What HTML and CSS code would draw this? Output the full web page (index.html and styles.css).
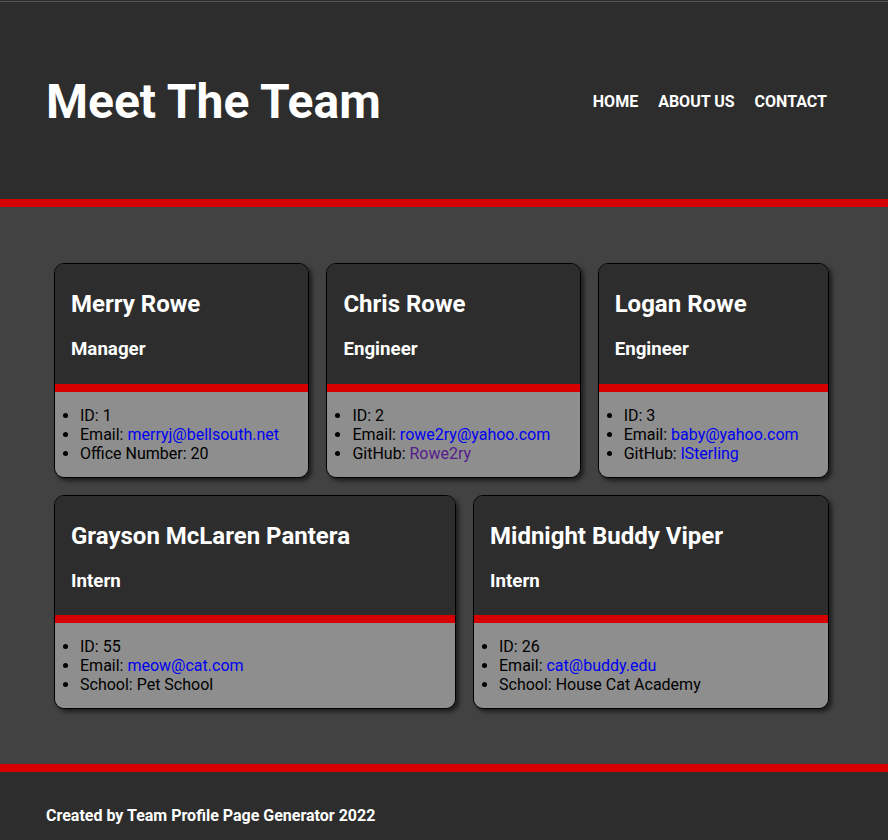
FILE: index.html
```html
<!DOCTYPE html>
<html lang="en">
<head>
<meta charset="utf-8">
<title>Meet The Team</title>
<link rel="stylesheet" href="styles.css">
</head>
<body>
<header class="site-header">
  <h1 class="site-title">Meet The Team</h1>
  <nav class="site-nav">
    <a class="nav-link" href="#">HOME</a>
    <a class="nav-link" href="#">ABOUT US</a>
    <a class="nav-link" href="#">CONTACT</a>
  </nav>
</header>
<main class="team">
  <div class="card">
    <div class="card-header">
      <h2 class="card-name">Merry Rowe</h2>
      <h3 class="card-role">Manager</h3>
    </div>
    <div class="card-body">
      <ul class="card-list">
        <li>ID: 1</li>
        <li>Email: <a class="link" href="#">merryj@bellsouth.net</a></li>
        <li>Office Number: 20</li>
      </ul>
    </div>
  </div>
  <div class="card">
    <div class="card-header">
      <h2 class="card-name">Chris Rowe</h2>
      <h3 class="card-role">Engineer</h3>
    </div>
    <div class="card-body">
      <ul class="card-list">
        <li>ID: 2</li>
        <li>Email: <a class="link" href="#">rowe2ry@yahoo.com</a></li>
        <li>GitHub: <a class="link visited" href="#">Rowe2ry</a></li>
      </ul>
    </div>
  </div>
  <div class="card">
    <div class="card-header">
      <h2 class="card-name">Logan Rowe</h2>
      <h3 class="card-role">Engineer</h3>
    </div>
    <div class="card-body">
      <ul class="card-list">
        <li>ID: 3</li>
        <li>Email: <a class="link" href="#">baby@yahoo.com</a></li>
        <li>GitHub: <a class="link" href="#">lSterling</a></li>
      </ul>
    </div>
  </div>
  <div class="card">
    <div class="card-header">
      <h2 class="card-name">Grayson McLaren Pantera</h2>
      <h3 class="card-role">Intern</h3>
    </div>
    <div class="card-body">
      <ul class="card-list">
        <li>ID: 55</li>
        <li>Email: <a class="link" href="#">meow@cat.com</a></li>
        <li>School: Pet School</li>
      </ul>
    </div>
  </div>
  <div class="card">
    <div class="card-header">
      <h2 class="card-name">Midnight Buddy Viper</h2>
      <h3 class="card-role">Intern</h3>
    </div>
    <div class="card-body">
      <ul class="card-list">
        <li>ID: 26</li>
        <li>Email: <a class="link" href="#">cat@buddy.edu</a></li>
        <li>School: House Cat Academy</li>
      </ul>
    </div>
  </div>
</main>
<footer class="site-footer">
  <p class="footer-text">Created by Team Profile Page Generator 2022</p>
</footer>
</body>
</html>
```

FILE: styles.css
```css
* {
  box-sizing: border-box;
}

html, body {
  margin: 0;
  padding: 0;
}

body {
  font-family: Roboto, "Liberation Sans", sans-serif;
  background: #424242;
  color: #000;
}

.site-header {
  height: 207px;
  background: #2d2d2d;
  border-bottom: 8px solid #d60000;
  box-shadow: inset 0 1px 0 #2d2d2d, inset 0 2px 0 #55555a;
  display: flex;
  align-items: center;
  justify-content: space-between;
  padding: 3px 61px 0 46px;
}

.site-title {
  margin: 0;
  font-size: 48px;
  font-weight: 700;
  color: #fff;
}

.site-nav {
  display: flex;
  gap: 20px;
}

.nav-link {
  color: #fff;
  text-decoration: none;
  font-size: 16px;
  font-weight: 700;
}

.team {
  display: flex;
  flex-wrap: wrap;
  gap: 17px 17px;
  padding: 56px 59px 55px 54px;
  background: #424242;
}

.card {
  flex: 1 1 auto;
  display: flex;
  flex-direction: column;
  border: 1px solid #000;
  border-radius: 10px;
  overflow: hidden;
  box-shadow: 3px 3px 4px rgba(0, 0, 0, 0.55);
}

.card-header {
  background: #2d2d2d;
  color: #fff;
  padding: 6px 16px 5px;
  border-bottom: 8px solid #d60000;
}

.card-name {
  font-size: 24px;
  font-weight: 700;
  margin: 20px 0;
  white-space: nowrap;
}

.card-role {
  font-size: 18.72px;
  font-weight: 700;
  margin: 18.72px 0;
}

.card-body {
  flex: 1;
  background: #8e8e8e;
}

.card-list {
  margin: 14px 0;
  padding-left: 25px;
  font-size: 16px;
  white-space: nowrap;
}

.link {
  color: #0000ee;
  text-decoration: none;
}

.link.visited {
  color: #551a8b;
}

.site-footer {
  background: #2d2d2d;
  border-top: 8px solid #d60000;
  padding: 34px 46px 33px;
}

.footer-text {
  margin: 0;
  color: #fff;
  font-size: 16px;
  font-weight: 700;
}
```
